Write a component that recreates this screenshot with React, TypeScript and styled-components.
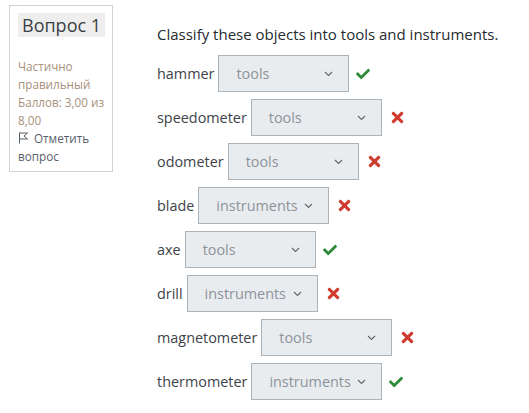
import React from 'react';
import styled, { createGlobalStyle } from 'styled-components';
import { FaCheck, FaTimes } from 'react-icons/fa';

const GlobalStyle = createGlobalStyle`
  body {
    margin: 0;
    background: #fff;
    font-family: 'Open Sans', 'Noto Sans', sans-serif;
    color: #343a40;
  }
`;

const Page = styled.div`
  display: flex;
  align-items: flex-start;
  padding: 5px 0 0 9px;
`;

const InfoBox = styled.div`
  width: 104px;
  box-sizing: border-box;
  border: 1px solid #cfd3d8;
  padding: 7px 4px 6px 8px;
`;

const QuestionNo = styled.h3`
  display: inline-block;
  margin: 0;
  padding: 0 4px 0 4px;
  background: #eeeeee;
  font-size: 18px;
  font-weight: 400;
  line-height: 24px;
  color: #3a3f45;
  white-space: nowrap;
`;

const State = styled.div`
  margin-top: 20px;
  font-size: 11.7px;
  line-height: 18px;
  color: #a8917b;
`;

const FlagLink = styled.div`
  font-size: 11.7px;
  line-height: 18px;
  color: #57606a;
`;

const Content = styled.div`
  margin-left: 44px;
  padding-top: 18px;
`;

const Prompt = styled.div`
  font-size: 15px;
  line-height: 22px;
  color: #262b30;
  margin-bottom: 10px;
`;

const Row = styled.div`
  display: flex;
  align-items: center;
  height: 37px;
  margin-bottom: 7px;
`;

const Label = styled.span`
  font-size: 14.4px;
  color: #3d4349;
  margin-right: 4px;
`;

const Select = styled.div`
  box-sizing: border-box;
  width: 131px;
  height: 37px;
  display: flex;
  align-items: center;
  justify-content: space-between;
  padding: 0 15px 0 17px;
  background: #e9ecef;
  border: 1px solid #aab2ba;
  font-size: 14.4px;
  color: #8c939b;
`;

const Mark = styled.span<{ ok: boolean }>`
  display: inline-flex;
  margin-left: 7px;
  font-size: ${p => (p.ok ? '14px' : '17px')};
  color: ${p => (p.ok ? '#2f8a3a' : '#cf3b2e')};
`;

const Chevron = () => (
  <svg width="9" height="6" viewBox="0 0 9 6">
    <polyline points="1,1 4.5,4.5 8,1" fill="none" stroke="#5f666d" strokeWidth="1.1" />
  </svg>
);

const FlagIcon = () => (
  <svg width="11" height="12" viewBox="0 0 11 12" style={{ marginRight: 5, verticalAlign: -1 }}>
    <path d="M1.5 0.5 V11.5" stroke="#57606a" strokeWidth="1" fill="none" />
    <path d="M1.5 1 L9.5 1 L6 4 L9.5 7 L1.5 7" stroke="#57606a" strokeWidth="1" fill="none" strokeLinejoin="round" />
  </svg>
);

const rows = [
  { name: 'hammer', value: 'tools', ok: true },
  { name: 'speedometer', value: 'tools', ok: false },
  { name: 'odometer', value: 'tools', ok: false },
  { name: 'blade', value: 'instruments', ok: false },
  { name: 'axe', value: 'tools', ok: true },
  { name: 'drill', value: 'instruments', ok: false },
  { name: 'magnetometer', value: 'tools', ok: false },
  { name: 'thermometer', value: 'instruments', ok: true },
];

const App: React.FC = () => (
  <>
    <GlobalStyle />
    <Page>
      <InfoBox>
        <QuestionNo>Вопрос 1</QuestionNo>
        <State>
          Частично правильный
          <br />
          Баллов: 3,00 из 8,00
        </State>
        <FlagLink>
          <FlagIcon />
          Отметить вопрос
        </FlagLink>
      </InfoBox>
      <Content>
        <Prompt>Classify these objects into tools and instruments.</Prompt>
        {rows.map(r => (
          <Row key={r.name}>
            <Label>{r.name}</Label>
            <Select>
              <span>{r.value}</span>
              <Chevron />
            </Select>
            <Mark ok={r.ok}>{r.ok ? <FaCheck /> : <FaTimes />}</Mark>
          </Row>
        ))}
      </Content>
    </Page>
  </>
);

export default App;
